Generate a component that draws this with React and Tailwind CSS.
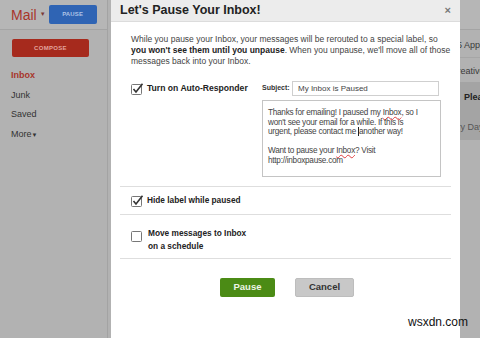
import React from "react";

function Check({ checked }) {
  return (
    <svg width="13" height="12" viewBox="0 0 13 12" className="shrink-0">
      <rect x="0.5" y="1.5" width="10" height="10" rx="1" fill="#fff" stroke="#777" />
      {checked && (
        <path d="M2.5 6 L5 9 L11.5 0.8" fill="none" stroke="#333" strokeWidth="1.6" />
      )}
    </svg>
  );
}

function Sidebar() {
  return (
    <div className="w-[108px] shrink-0 border-r border-[#a3a3a3] bg-[#b2b2b2]">
      <div className="flex h-[30px] items-center border-b border-[#a4a4a4] bg-[#b6b6b6] pl-[11px]">
        <span className="text-[14px] leading-none text-[#a8352b]">Mail</span>
        <span className="ml-[3px] text-[6px] text-[#7a3b36]">▼</span>
        <div className="ml-[3px] flex h-[19px] w-[48px] items-center justify-center rounded-[2px] bg-[#2f64b4] text-[6px] font-bold tracking-wide text-[#aec3e6]">
          PAUSE
        </div>
      </div>
      <div className="mt-[9px] ml-[12px] flex h-[18px] w-[77px] items-center justify-center rounded-[2px] bg-[#a62a1d] text-[6px] font-bold tracking-wider text-[#e3a49c]">
        COMPOSE
      </div>
      <div className="mt-[9px] flex flex-col pl-[11px] text-[9px] leading-[19.5px] text-[#333]">
        <span className="font-bold text-[#a8352b]">Inbox</span>
        <span>Junk</span>
        <span>Saved</span>
        <span>
          More<span className="text-[6px]">▼</span>
        </span>
      </div>
    </div>
  );
}

function RightStrip() {
  return (
    <div className="flex-1 overflow-hidden bg-[#b2b2b2] text-[9px] text-[#3a3a3a]">
      <div className="h-[30px] border-b border-[#a4a4a4] bg-[#b6b6b6]" />
      <div className="h-[28px] border-b border-[#a6a6a6] pt-[9px] whitespace-nowrap -ml-[3px]">5 Apps</div>
      <div className="h-[24px] pt-[7px] whitespace-nowrap -ml-[9px]">Creative</div>
      <div className="h-[58px] bg-[#a4a4a4] whitespace-nowrap">
        <div className="pt-[9px] pl-[4px] font-bold text-[#222]">Please</div>
        <div className="pt-[16px] -ml-[18px] text-[#555]">Every Day</div>
      </div>
    </div>
  );
}

function Spell({ children }) {
  return (
    <span className="underline decoration-wavy decoration-[#e04040] decoration-[0.5px] underline-offset-[1px]">
      {children}
    </span>
  );
}

function Modal() {
  return (
    <div className="flex w-[349px] shrink-0 ml-[3px] flex-col bg-white text-[#333]">
      <div className="flex h-[22px] items-center justify-between border-b border-[#dcdcdc] bg-[#ececec] pl-[9px] pr-[9px]">
        <span className="text-[12.5px] font-bold text-[#222]">Let's Pause Your Inbox!</span>
        <span className="text-[11px] font-bold text-[#777]">×</span>
      </div>
      <div className="px-[9px]">
        <p className="mt-[12px] pl-[11px] whitespace-nowrap text-[8.5px] leading-[11px] text-[#444]">
          While you pause your Inbox, your messages will be rerouted to a special label, so
          <br />
          <b className="text-[#222]">you won't see them until you unpause</b>. When you unpause, we'll move all of those
          <br />
          messages back into your Inbox.
        </p>
        <div className="mt-[14px] flex border-b border-[#dedede] pb-[9px] pl-[11px]">
          <div className="flex h-[15px] w-[131px] items-center gap-[3px]">
            <Check checked />
            <span className="text-[8.6px] font-bold text-[#222]">Turn on Auto-Responder</span>
          </div>
          <div className="flex flex-col">
            <div className="flex h-[15px] items-center">
              <span className="w-[30px] text-[7px] font-bold text-[#333]">Subject:</span>
              <div className="flex h-[15px] w-[147px] items-center border border-[#cfcfcf] pl-[5px] text-[8px] text-[#444]">
                My Inbox is Paused
              </div>
            </div>
            <div className="mt-[4px] h-[77px] w-[179px] border border-[#c4c4c4] px-[5px] pt-[7px] whitespace-nowrap text-[8.2px] tracking-[-0.25px] leading-[9.5px] text-[#444]">
              Thanks for emailing! I paused my <Spell>Inbox</Spell>, so I
              <br />
              won't see your email for a while. If this is
              <br />
              urgent, please contact me <span className="border-l border-[#222]">another way!</span>
              <br />
              <br />
              Want to pause your <Spell>Inbox</Spell>? Visit
              <br />
              http://inboxpause.com
            </div>
          </div>
        </div>
        <div className="flex h-[28px] items-center gap-[3px] border-b border-[#dedede] pl-[11px]">
          <Check checked />
          <span className="text-[8.3px] font-bold text-[#222]">Hide label while paused</span>
        </div>
        <div className="flex h-[44px] items-start gap-[4px] border-b border-[#dedede] pl-[11px] pt-[12px]">
          <div className="mt-[3px]">
            <Check />
          </div>
          <span className="text-[8.3px] font-bold leading-[13px] text-[#222]">
            Move messages to Inbox
            <br />
            on a schedule
          </span>
        </div>
        <div className="mt-[19px] flex justify-center gap-[20px] pl-[3px]">
          <div className="flex h-[19px] w-[55px] items-center justify-center rounded-[2px] bg-[#4b8b15] text-[9.5px] font-bold text-[#eef5e6]">
            Pause
          </div>
          <div className="flex h-[19px] w-[59px] items-center justify-center rounded-[2px] border border-[#bdbdbd] bg-[#c8c8c8] text-[9.5px] font-bold text-[#333]">
            Cancel
          </div>
        </div>
      </div>
    </div>
  );
}

export default function App() {
  return (
    <div
      className="relative flex h-[338px] w-[480px] overflow-hidden bg-[#b2b2b2]"
      style={{ fontFamily: '"Liberation Sans", Arial, sans-serif' }}
    >
      <Sidebar />
      <Modal />
      <RightStrip />
      <span className="absolute bottom-[7px] right-[12px] text-[12px] text-[#111]">wsxdn.com</span>
    </div>
  );
}
